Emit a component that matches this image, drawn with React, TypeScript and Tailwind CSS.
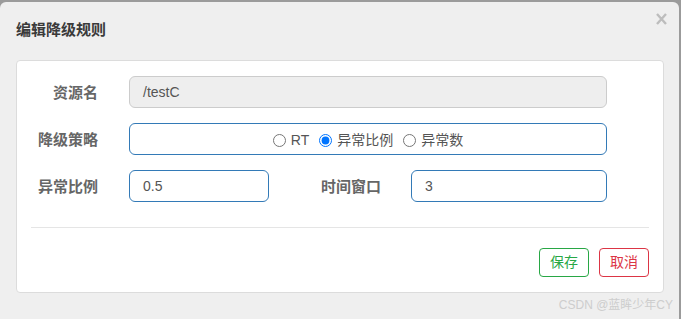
import React from "react";

const font = { fontFamily: '"Liberation Sans", "Noto Sans CJK SC", sans-serif' };

function Radio({ label, checked }: { label: string; checked?: boolean }) {
  return (
    <label className="flex items-center text-[14px] text-[#555]">
      <input type="radio" name="grade" defaultChecked={checked} className="m-0 w-[13px] h-[13px]" />
      <span className="ml-[5px]">{label}</span>
    </label>
  );
}

const labelCls = "text-right text-[15px] font-bold text-[#666] pt-[2px]";

export default function App() {
  return (
    <div className="w-[681px] h-[319px] bg-[#9b9b9b] pt-[2px] overflow-hidden" style={font}>
      <div className="w-[679px] h-[317px] bg-[#efefef] rounded-t-[6px] flex flex-col">
        <div className="h-[58px] flex items-start justify-between pl-[16px] pr-[12px]">
          <div className="pt-[18px] text-[15px] leading-[20px] font-bold text-[#3a3a3a]">编辑降级规则</div>
          <svg width="11" height="12" viewBox="0 0 11 12" className="mt-[11px]">
            <path d="M1 1 L10 11 M10 1 L1 11" stroke="#bdbdbd" strokeWidth="2.4" fill="none" />
          </svg>
        </div>
        <div className="ml-[16px] w-[648px] h-[233px] bg-white border border-[#dcdcdc] rounded-[4px] px-[14px] pt-[15px]">
          <div className="flex items-center h-[32px]">
            <div className={`w-[67px] ${labelCls}`}>资源名</div>
            <div className="ml-[31px] w-[478px] h-[32px] bg-[#eee] border border-[#ccc] rounded-[6px] flex items-center px-[13px] text-[14px] text-[#555]">
              /testC
            </div>
          </div>
          <div className="flex items-center h-[32px] mt-[15px]">
            <div className={`w-[67px] ${labelCls}`}>降级策略</div>
            <div className="ml-[31px] w-[478px] h-[32px] border border-[#337ab7] rounded-[6px] flex items-center justify-center gap-[10px] pt-[2px]">
              <Radio label="RT" />
              <Radio label="异常比例" checked />
              <Radio label="异常数" />
            </div>
          </div>
          <div className="flex items-center h-[32px] mt-[15px]">
            <div className={`w-[67px] ${labelCls}`}>异常比例</div>
            <div className="ml-[31px] w-[140px] h-[32px] border border-[#337ab7] rounded-[6px] flex items-center px-[13px] text-[14px] text-[#555]">
              0.5
            </div>
            <div className={`w-[112px] ${labelCls}`}>时间窗口</div>
            <div className="ml-[30px] w-[196px] h-[32px] border border-[#337ab7] rounded-[6px] flex items-center px-[13px] text-[14px] text-[#555]">
              3
            </div>
          </div>
          <div className="mt-[25px] border-t border-[#e5e5e5] w-[618px]" />
          <div className="mt-[20px] w-[618px] flex justify-end gap-[10px]">
            <button className="w-[50px] h-[29px] border border-[#28a745] rounded-[4px] text-[14px] text-[#28a745] bg-white">保存</button>
            <button className="w-[50px] h-[29px] border border-[#dc3545] rounded-[4px] text-[14px] text-[#dc3545] bg-white">取消</button>
          </div>
        </div>
        <div className="flex justify-end pr-[6px] mt-[4px] text-[12px] leading-[16px] text-[#cdcdcd]">CSDN @蓝眸少年CY</div>
      </div>
    </div>
  );
}
